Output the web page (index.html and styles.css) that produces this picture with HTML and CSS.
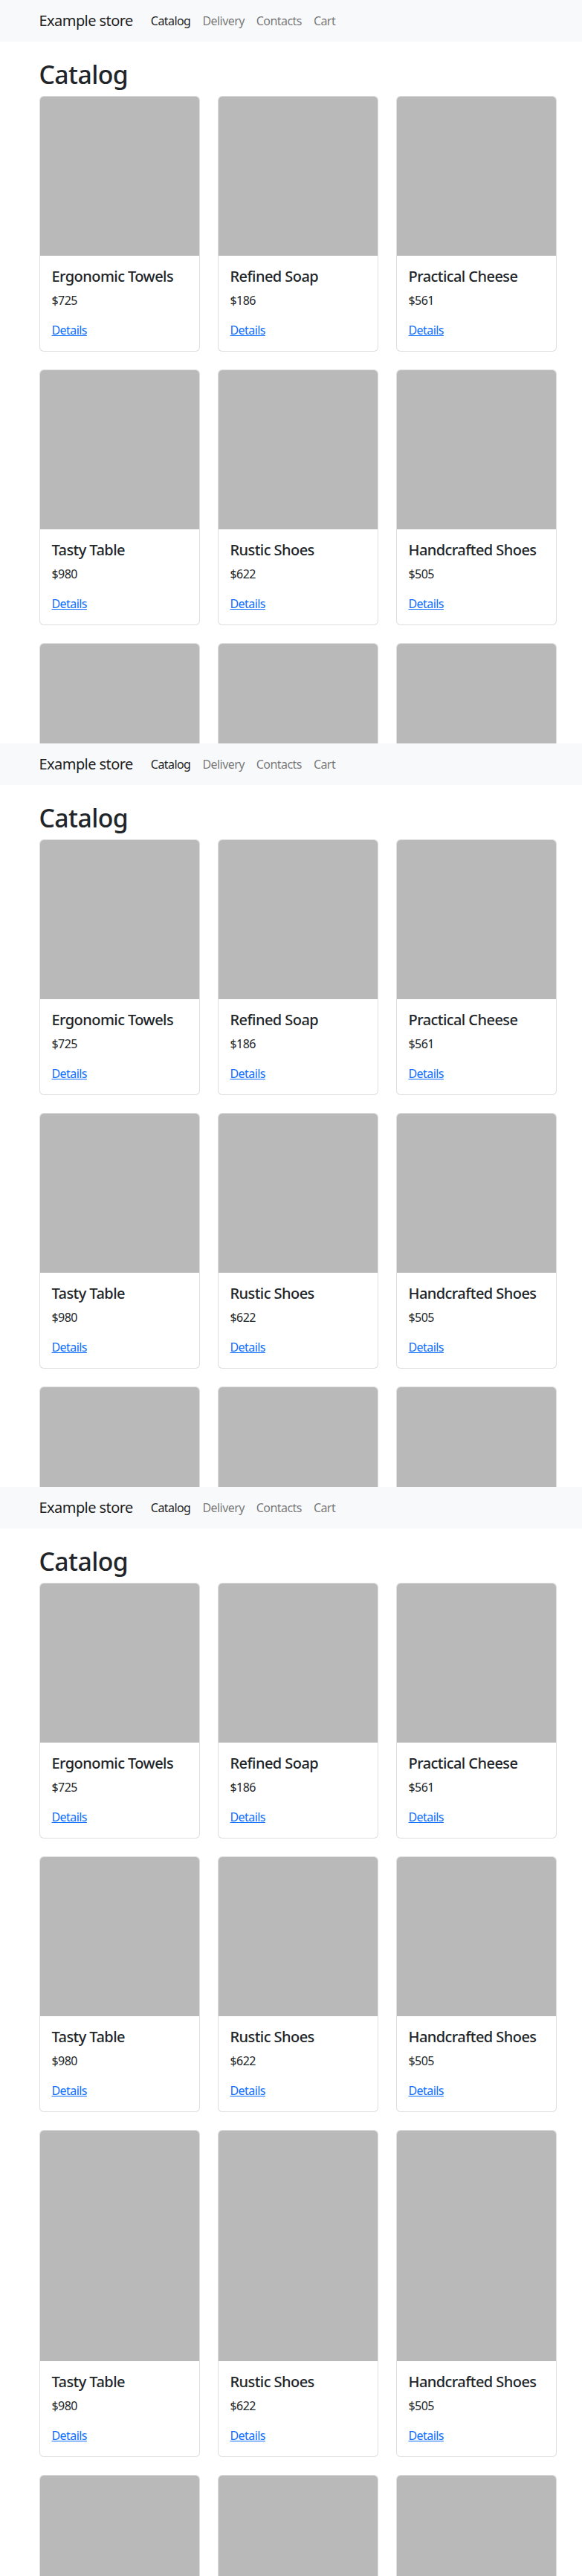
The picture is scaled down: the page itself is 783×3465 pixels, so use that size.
FILE: index.html
```html
<!DOCTYPE html>
<html lang="en">
<head>
<meta charset="utf-8">
<title>Example store</title>
<link rel="stylesheet" href="styles.css">
</head>
<body>

<section class="frame">
  <nav class="navbar">
    <div class="container nav-inner">
      <a class="brand" href="#">Example store</a>
      <ul class="nav">
        <li><a class="nav-link active" href="#">Catalog</a></li>
        <li><a class="nav-link" href="#">Delivery</a></li>
        <li><a class="nav-link" href="#">Contacts</a></li>
        <li><a class="nav-link" href="#">Cart</a></li>
      </ul>
    </div>
  </nav>
  <main class="container">
    <h1 class="page-title">Catalog</h1>
    <div class="grid">
      <div class="card"><div class="card-img"></div><div class="card-body"><h5 class="card-title">Ergonomic Towels</h5><p class="card-price">$725</p><a class="card-link" href="#">Details</a></div></div>
      <div class="card"><div class="card-img"></div><div class="card-body"><h5 class="card-title">Refined Soap</h5><p class="card-price">$186</p><a class="card-link" href="#">Details</a></div></div>
      <div class="card"><div class="card-img"></div><div class="card-body"><h5 class="card-title">Practical Cheese</h5><p class="card-price">$561</p><a class="card-link" href="#">Details</a></div></div>
      <div class="card"><div class="card-img"></div><div class="card-body"><h5 class="card-title">Tasty Table</h5><p class="card-price">$980</p><a class="card-link" href="#">Details</a></div></div>
      <div class="card"><div class="card-img"></div><div class="card-body"><h5 class="card-title">Rustic Shoes</h5><p class="card-price">$622</p><a class="card-link" href="#">Details</a></div></div>
      <div class="card"><div class="card-img"></div><div class="card-body"><h5 class="card-title">Handcrafted Shoes</h5><p class="card-price">$505</p><a class="card-link" href="#">Details</a></div></div>
      <div class="card"><div class="card-img card-img--tall"></div></div>
      <div class="card"><div class="card-img card-img--tall"></div></div>
      <div class="card"><div class="card-img card-img--tall"></div></div>
    </div>
  </main>
</section>

<section class="frame">
  <nav class="navbar">
    <div class="container nav-inner">
      <a class="brand" href="#">Example store</a>
      <ul class="nav">
        <li><a class="nav-link active" href="#">Catalog</a></li>
        <li><a class="nav-link" href="#">Delivery</a></li>
        <li><a class="nav-link" href="#">Contacts</a></li>
        <li><a class="nav-link" href="#">Cart</a></li>
      </ul>
    </div>
  </nav>
  <main class="container">
    <h1 class="page-title">Catalog</h1>
    <div class="grid">
      <div class="card"><div class="card-img"></div><div class="card-body"><h5 class="card-title">Ergonomic Towels</h5><p class="card-price">$725</p><a class="card-link" href="#">Details</a></div></div>
      <div class="card"><div class="card-img"></div><div class="card-body"><h5 class="card-title">Refined Soap</h5><p class="card-price">$186</p><a class="card-link" href="#">Details</a></div></div>
      <div class="card"><div class="card-img"></div><div class="card-body"><h5 class="card-title">Practical Cheese</h5><p class="card-price">$561</p><a class="card-link" href="#">Details</a></div></div>
      <div class="card"><div class="card-img"></div><div class="card-body"><h5 class="card-title">Tasty Table</h5><p class="card-price">$980</p><a class="card-link" href="#">Details</a></div></div>
      <div class="card"><div class="card-img"></div><div class="card-body"><h5 class="card-title">Rustic Shoes</h5><p class="card-price">$622</p><a class="card-link" href="#">Details</a></div></div>
      <div class="card"><div class="card-img"></div><div class="card-body"><h5 class="card-title">Handcrafted Shoes</h5><p class="card-price">$505</p><a class="card-link" href="#">Details</a></div></div>
      <div class="card"><div class="card-img card-img--tall"></div></div>
      <div class="card"><div class="card-img card-img--tall"></div></div>
      <div class="card"><div class="card-img card-img--tall"></div></div>
    </div>
  </main>
</section>

<section class="frame frame--last">
  <nav class="navbar">
    <div class="container nav-inner">
      <a class="brand" href="#">Example store</a>
      <ul class="nav">
        <li><a class="nav-link active" href="#">Catalog</a></li>
        <li><a class="nav-link" href="#">Delivery</a></li>
        <li><a class="nav-link" href="#">Contacts</a></li>
        <li><a class="nav-link" href="#">Cart</a></li>
      </ul>
    </div>
  </nav>
  <main class="container">
    <h1 class="page-title">Catalog</h1>
    <div class="grid">
      <div class="card"><div class="card-img"></div><div class="card-body"><h5 class="card-title">Ergonomic Towels</h5><p class="card-price">$725</p><a class="card-link" href="#">Details</a></div></div>
      <div class="card"><div class="card-img"></div><div class="card-body"><h5 class="card-title">Refined Soap</h5><p class="card-price">$186</p><a class="card-link" href="#">Details</a></div></div>
      <div class="card"><div class="card-img"></div><div class="card-body"><h5 class="card-title">Practical Cheese</h5><p class="card-price">$561</p><a class="card-link" href="#">Details</a></div></div>
      <div class="card"><div class="card-img"></div><div class="card-body"><h5 class="card-title">Tasty Table</h5><p class="card-price">$980</p><a class="card-link" href="#">Details</a></div></div>
      <div class="card"><div class="card-img"></div><div class="card-body"><h5 class="card-title">Rustic Shoes</h5><p class="card-price">$622</p><a class="card-link" href="#">Details</a></div></div>
      <div class="card"><div class="card-img"></div><div class="card-body"><h5 class="card-title">Handcrafted Shoes</h5><p class="card-price">$505</p><a class="card-link" href="#">Details</a></div></div>
      <div class="card"><div class="card-img card-img--tall"></div><div class="card-body"><h5 class="card-title">Tasty Table</h5><p class="card-price">$980</p><a class="card-link" href="#">Details</a></div></div>
      <div class="card"><div class="card-img card-img--tall"></div><div class="card-body"><h5 class="card-title">Rustic Shoes</h5><p class="card-price">$622</p><a class="card-link" href="#">Details</a></div></div>
      <div class="card"><div class="card-img card-img--tall"></div><div class="card-body"><h5 class="card-title">Handcrafted Shoes</h5><p class="card-price">$505</p><a class="card-link" href="#">Details</a></div></div>
      <div class="card"><div class="card-img card-img--tall"></div></div>
      <div class="card"><div class="card-img card-img--tall"></div></div>
      <div class="card"><div class="card-img card-img--tall"></div></div>
    </div>
  </main>
</section>

</body>
</html>
```

FILE: styles.css
```css
* {
  box-sizing: border-box;
}

html, body {
  margin: 0;
  padding: 0;
  background: #fff;
}

body {
  font-family: "Noto Sans", "Open Sans", sans-serif;
  font-size: 16px;
  line-height: 1.5;
  color: #212529;
  letter-spacing: -0.035em;
}

.frame {
  height: 1000px;
  overflow: hidden;
}

.frame--last {
  height: 1465px;
}

.container {
  width: 696px;
  margin-left: 52.5px;
}

.navbar {
  background: #f8f9fa;
  padding: 8px 0;
}

.nav-inner {
  display: flex;
  align-items: center;
}

.brand {
  font-size: 20px;
  line-height: 30px;
  padding: 5px 0;
  margin-right: 16px;
  color: rgba(0, 0, 0, 0.9);
  text-decoration: none;
}

.nav {
  display: flex;
  list-style: none;
  margin: 0;
  padding: 0;
}

.nav-link {
  display: block;
  padding: 8px 8px;
  font-size: 16px;
  line-height: 24px;
  color: rgba(0, 0, 0, 0.55);
  text-decoration: none;
}

.nav-link.active {
  color: rgba(0, 0, 0, 0.9);
}

.page-title {
  margin: 24px 0 8px;
  font-size: 33.75px;
  font-weight: 500;
  line-height: 1.2;
  color: #212529;
}

.grid {
  display: grid;
  grid-template-columns: repeat(3, 1fr);
  gap: 24px;
}

.card {
  border: 1px solid rgba(0, 0, 0, 0.13);
  border-radius: 6px;
  overflow: hidden;
  background: #fff;
  display: flex;
  flex-direction: column;
}

.card-img {
  height: 214px;
  background: #b9b9b9;
}

.card-img--tall {
  height: 310px;
}

.card-body {
  padding: 16px;
}

.card-title {
  margin: 0 0 8px;
  font-size: 20px;
  font-weight: 500;
  line-height: 1.2;
  color: #212529;
}

.card-price {
  margin: 0 0 16px;
  font-size: 16px;
  line-height: 24px;
}

.card-link {
  display: inline-block;
  font-size: 16px;
  line-height: 24px;
  color: #0d6efd;
  text-decoration: underline;
}
```
